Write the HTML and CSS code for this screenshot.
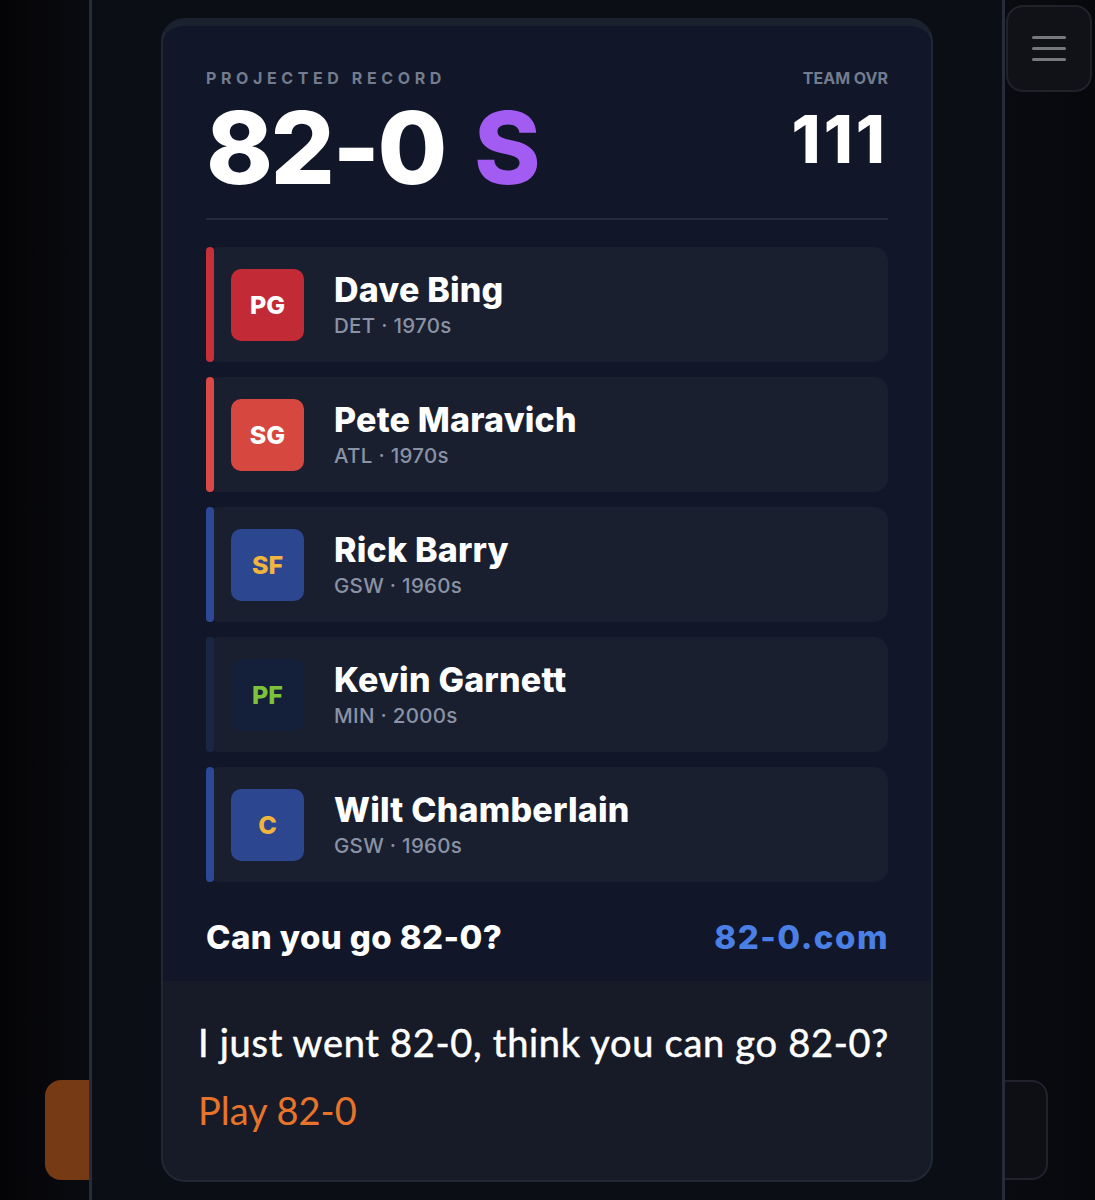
FILE: index.html
```html
<!DOCTYPE html>
<html lang="en">
<head>
    <meta charset="UTF-8">
    <meta name="viewport" content="width=device-width, initial-scale=1.0">
    <title>82-0 · Share</title>
    <link rel="stylesheet" href="styles.css">
</head>
<body>
    <div class="page">
        <header class="topbar">
            <button class="menu-btn" aria-label="Menu">
                <span></span>
                <span></span>
                <span></span>
            </button>
        </header>
        <footer class="actions">
            <button class="btn btn-play"></button>
            <button class="btn btn-ghost"></button>
        </footer>
    </div>

    <div class="share-modal">
        <div class="share-card">
            <div class="share-image">
                <div class="summary">
                    <div>
                        <div class="label label-wide">PROJECTED RECORD</div>
                        <div class="record">82-0<span class="grade">S</span></div>
                    </div>
                    <div class="ovr">
                        <div class="label">TEAM OVR</div>
                        <div class="ovr-value">111</div>
                    </div>
                </div>

                <ul class="roster">
                    <li class="player pos-pg">
                        <span class="bar"></span>
                        <span class="badge">PG</span>
                        <div class="info">
                            <div class="name">Dave Bing</div>
                            <div class="meta">DET · 1970s</div>
                        </div>
                    </li>
                    <li class="player pos-sg">
                        <span class="bar"></span>
                        <span class="badge">SG</span>
                        <div class="info">
                            <div class="name">Pete Maravich</div>
                            <div class="meta">ATL · 1970s</div>
                        </div>
                    </li>
                    <li class="player pos-sf">
                        <span class="bar"></span>
                        <span class="badge">SF</span>
                        <div class="info">
                            <div class="name">Rick Barry</div>
                            <div class="meta">GSW · 1960s</div>
                        </div>
                    </li>
                    <li class="player pos-pf">
                        <span class="bar"></span>
                        <span class="badge">PF</span>
                        <div class="info">
                            <div class="name">Kevin Garnett</div>
                            <div class="meta">MIN · 2000s</div>
                        </div>
                    </li>
                    <li class="player pos-c">
                        <span class="bar"></span>
                        <span class="badge">C</span>
                        <div class="info">
                            <div class="name">Wilt Chamberlain</div>
                            <div class="meta">GSW · 1960s</div>
                        </div>
                    </li>
                </ul>

                <div class="share-footer">
                    <span class="cta">Can you go 82-0?</span>
                    <span class="site">82-0.com</span>
                </div>
            </div>

            <div class="share-text">
                <p>I just went 82-0, think you can go 82-0?</p>
                <a href="#">Play 82-0</a>
            </div>
        </div>
    </div>
</body>
</html>
```

FILE: styles.css
```css
body {
    margin: 0;
    width: 1095px;
    height: 1200px;
    overflow: hidden;
    position: relative;
    font-family: Inter, "Liberation Sans", sans-serif;
    background: linear-gradient(90deg, #040406 0%, #0a0b10 8%, #0a0b10 92%, #07080c 100%);
    color: #fff;
}

/* page underneath the share sheet */
.page {
    height: 1200px;
    box-sizing: border-box;
    display: flex;
    flex-direction: column;
    justify-content: space-between;
    padding: 5px 0 20px 0;
}

.topbar {
    display: flex;
    justify-content: flex-end;
    padding-right: 3px;
}

.menu-btn {
    width: 86px;
    height: 87px;
    border-radius: 17px;
    background: #111218;
    border: 2px solid #202229;
    display: flex;
    flex-direction: column;
    align-items: center;
    justify-content: center;
    gap: 8px;
    padding: 0;
}

.menu-btn span {
    width: 34px;
    height: 3px;
    border-radius: 2px;
    background: #77787e;
}

.actions {
    display: flex;
    gap: 24px;
    padding: 0 47px 0 45px;
}

.btn {
    flex: 1;
    height: 100px;
    border-radius: 16px;
    border: none;
}

.btn-play {
    background: #763a14;
}

.btn-ghost {
    background: #0e0f15;
    border: 2px solid #20232c;
}

/* share sheet */
.share-modal {
    position: absolute;
    top: 0;
    left: 89px;
    width: 916px;
    height: 1200px;
    box-sizing: border-box;
    background: #0c0e16;
    border-left: 3px solid #282c3a;
    border-right: 3px solid #282c3a;
    padding: 18px 69px 0 69px;
}

.share-card {
    border: 2px solid #222734;
    border-top: 8px solid #1c2130;
    border-radius: 24px;
    overflow: hidden;
    background: #171b28;
}

.share-image {
    background: #111728;
    padding: 44px 43px 25px;
}

.summary {
    display: flex;
    justify-content: space-between;
    padding-bottom: 20px;
    border-bottom: 2px solid #262c3b;
}

.label {
    font-size: 16px;
    line-height: 17px;
    font-weight: 700;
    color: #737b8e;
}

.label-wide {
    letter-spacing: 4.6px;
}

.record {
    margin-top: 10px;
    font-size: 101px;
    line-height: 1;
    font-weight: 800;
    letter-spacing: -2.5px;
}

.grade {
    margin-left: 29px;
    color: #a35cf1;
}

.ovr {
    text-align: right;
}

.ovr-value {
    margin-top: 19px;
    font-size: 66px;
    line-height: 1;
    font-weight: 800;
    letter-spacing: 3px;
}

.roster {
    list-style: none;
    margin: 27px 0 0;
    padding: 0;
    display: flex;
    flex-direction: column;
    gap: 15px;
}

.player {
    display: flex;
    align-items: center;
    height: 115px;
    background: #1a1f2f;
    border-radius: 14px;
}

.bar {
    align-self: stretch;
    width: 8px;
    border-radius: 4px;
}

.badge {
    width: 73px;
    height: 72px;
    margin-left: 17px;
    border-radius: 10px;
    display: flex;
    align-items: center;
    justify-content: center;
    font-size: 25px;
    font-weight: 800;
}

.info {
    margin-left: 30px;
}

.name {
    font-size: 34px;
    line-height: 38px;
    font-weight: 800;
    letter-spacing: 0.2px;
}

.meta {
    margin-top: 5px;
    font-size: 20.5px;
    line-height: 24px;
    font-weight: 500;
    letter-spacing: 0.3px;
    color: #8a92a5;
}

.pos-pg .bar { background: #c7303b; }
.pos-pg .badge { background: #c22b36; color: #fff; }

.pos-sg .bar { background: #db4848; }
.pos-sg .badge { background: #d6473f; color: #fff; }

.pos-sf .bar,
.pos-c .bar { background: #2c4896; }
.pos-sf .badge,
.pos-c .badge { background: #2c4690; color: #f1b53e; }

.pos-pf .bar { background: #1a2644; }
.pos-pf .badge { background: #14203a; color: #7cc23a; }

.share-footer {
    display: flex;
    justify-content: space-between;
    align-items: center;
    margin-top: 36px;
    font-size: 33px;
    line-height: 38px;
    font-weight: 800;
}

.cta {
    letter-spacing: 0.4px;
}

.site {
    color: #4a7fe6;
    letter-spacing: 1.5px;
    margin-right: -1px;
}

.share-text {
    padding: 38px 35px 47px;
    font-family: Lato, "Noto Sans", sans-serif;
}

.share-text p {
    margin: 0;
    font-size: 38px;
    line-height: 46px;
    letter-spacing: 0.7px;
    -webkit-text-stroke: 0.5px #fff;
    color: #fff;
}

.share-text a {
    display: block;
    margin-top: 22px;
    font-size: 38px;
    line-height: 46px;
    color: #e8742b;
    text-decoration: none;
}
```
